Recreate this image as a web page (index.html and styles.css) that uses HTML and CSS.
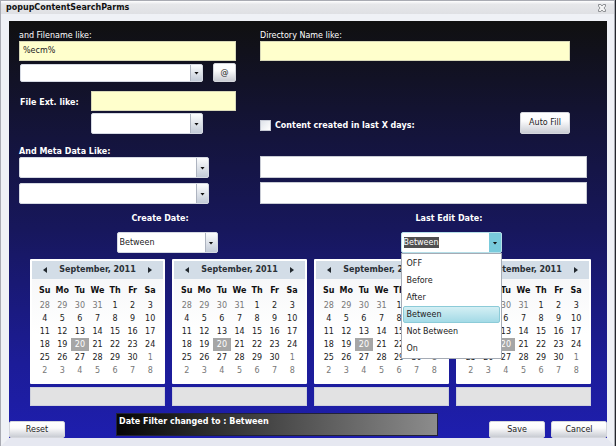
FILE: index.html
```html
<!DOCTYPE html>
<html lang="en">
<head>
<meta charset="utf-8">
<title>popupContentSearchParms</title>
<link rel="stylesheet" href="styles.css">
</head>
<body>
<div class="window">
  <header class="titlebar">
    <h1 class="title">popupContentSearchParms</h1>
    <button class="close" type="button" aria-label="Close">
      <svg viewBox="0 0 8 8" width="8" height="8"><path d="M.5.5h2.300L4 2 5.200.5h2.300v1.700L6 4l1.500 1.800v1.700H5.200L4 6 2.800 7.500H.5V5.800L2 4 .5 2.200z" fill="#f4f4f5" stroke="#85878a" stroke-width=".9"/></svg>
    </button>
  </header>

  <form class="panel">
    <div class="criteria">
      <div class="column">
        <label class="label" for="filename">and Filename like:</label>
        <input class="text yellow" id="filename" type="text" value="%ecm%">
        <div class="row preset">
          <span class="combo"><select aria-label="Filename preset"><option></option></select></span>
          <button class="button at" type="button">@</button>
        </div>
        <div class="extension">
          <label class="label strong" for="ext">File Ext. like:</label>
          <input class="text yellow" id="ext" type="text">
          <span class="combo ext-combo"><select aria-label="Extension preset"><option></option></select></span>
        </div>
      </div>
      <div class="column">
        <div class="directory">
          <label class="label" for="directory">Directory Name like:</label>
          <input class="text yellow" id="directory" type="text">
        </div>
        <div class="row recent">
          <label class="label strong check"><input type="checkbox">Content created in last X days:</label>
          <button class="button autofill" type="button">Auto Fill</button>
        </div>
      </div>
    </div>

    <div class="criteria meta">
      <div class="column meta-fields">
        <label class="label strong" for="meta1">And Meta Data Like:</label>
        <span class="combo tall"><select id="meta1"><option></option></select></span>
        <span class="combo tall"><select aria-label="Second meta data field"><option></option></select></span>
      </div>
      <div class="column meta-values">
        <input class="text" type="text" aria-label="First meta data value">
        <input class="text" type="text" aria-label="Second meta data value">
      </div>
    </div>

    <div class="dates">
      <div class="date-filter">
        <label class="label strong" for="created">Create Date:</label>
        <span class="combo tall"><select id="created"><option>Between</option></select></span>
      </div>
      <div class="date-filter">
        <span class="label strong" id="edited-label">Last Edit Date:</span>
        <span class="combo tall open">
          <button class="combo-value" type="button" role="combobox" aria-expanded="true" aria-controls="edited-list" aria-labelledby="edited-label"><span class="selected-text">Between</span></button>
          <ul class="menu" id="edited-list" role="listbox" aria-labelledby="edited-label">
            <li role="option">OFF</li>
            <li role="option">Before</li>
            <li role="option">After</li>
            <li class="active" role="option" aria-selected="true">Between</li>
            <li role="option">Not Between</li>
            <li role="option">On</li>
          </ul>
        </span>
      </div>
    </div>

    <div class="calendars" id="calendars"></div>

    <footer class="footer">
      <button class="button action" type="reset">Reset</button>
      <output class="status">Date Filter changed to : Between</output>
      <div class="row actions">
        <button class="button action" type="button">Save</button>
        <button class="button action" type="button">Cancel</button>
      </div>
    </footer>
  </form>
</div>
<script src="app.js"></script>
</body>
</html>
```
FILE: styles.css
```css
* { box-sizing: border-box; }

body {
  margin: 0;
  background: #24272d;
  color: #222;
  font: 8px/10px "DejaVu Sans", sans-serif;
}

button, input, select { font: inherit; color: inherit; margin: 0; }

.window {
  min-height: 100vh;
  margin-right: 1px;
  display: flex;
  flex-direction: column;
  border: solid #a9abb3;
  border-width: 1px 1px 0 1px;
  background: #e9ebf2;
}

.titlebar {
  display: flex;
  align-items: center;
  justify-content: space-between;
  height: 13px;
  padding: 0 8px 0 5px;
  background: linear-gradient(#fff, #e6e7ea 25%, #dfe0e4);
}

.title { margin: 0; font-size: 8px; line-height: 13px; color: #111; }

.close { display: flex; padding: 0; border: 0; background: none; }

.panel {
  flex: 1;
  display: flex;
  flex-direction: column;
  margin: 0;
  border: solid #eff1f6;
  border-width: 7px 7px 8px 8px;
  border-bottom-color: #e6e8f1;
  background: linear-gradient(#101010, #14143c 28%, #17175c 50%, #1c1c98 82%, #1e1eae) padding-box;
}

.criteria {
  display: grid;
  grid-template-columns: 217fr 327fr;
  column-gap: 24px;
  padding: 10px 20px 0 10px;
}

.column { display: flex; flex-direction: column; min-width: 0; }
.row { display: flex; align-items: center; justify-content: space-between; }

.label { color: #fff; line-height: 10px; }
.strong { font-weight: bold; }

.text {
  display: block;
  width: 100%;
  height: 20px;
  padding: 0 3px 2px;
  border: 1px solid #c8cbd4;
  background: #fff;
}
.yellow { background: #ffffcc; border-color: #d8d8b8; }

.combo { position: relative; display: block; height: 18px; }
.tall { height: 21px; }
.combo::after {
  content: "";
  position: absolute;
  right: 4px;
  top: calc(50% - 1px);
  width: 5px;
  height: 3px;
  background: #111;
  clip-path: polygon(0 0, 100% 0, 50% 100%);
  pointer-events: none;
}
.combo select, .combo-value {
  appearance: none;
  display: block;
  width: 100%;
  height: 100%;
  padding: 0 14px 0 2px;
  border: 1px solid #d5d9e2;
  border-radius: 2px;
  text-align: left;
  background:
    linear-gradient(#aeb4c0, #aeb4c0) right 11px top / 1px 100% no-repeat,
    linear-gradient(#fcfdfe, #c3cbd7) right / 11px 100% no-repeat,
    #fff;
}

.preset { height: 23px; }
.preset .combo { flex: 1; margin: 0 10px 0 1px; }

.button {
  padding: 0;
  border: 1px solid #d4d6dc;
  border-radius: 2px;
  color: #222;
  text-align: center;
  background: linear-gradient(#fff, #fbfbfc 40%, #c9ccd3);
}
.at { width: 23px; height: 19px; }

.extension {
  display: grid;
  grid-template-columns: 71px 1fr;
  align-items: center;
  row-gap: 2px;
  margin-top: 7px;
  padding-left: 1px;
}
.extension .label { padding-top: 3px; }
.ext-combo { grid-column: 2; height: 21px; margin-right: 33px; }

.directory, .recent { margin-right: 17px; }
.directory .label { display: block; }
.recent { margin-top: 51px; }
.check { display: flex; align-items: center; gap: 4px; padding-top: 5px; }
.check input {
  appearance: none;
  width: 11px;
  height: 11px;
  border: 1px solid #c5c9d4;
  background: linear-gradient(135deg, #dfe3ea, #fff);
}
.autofill { width: 50px; height: 22px; }

.meta { padding-top: 13px; }
.meta-fields { padding-right: 27px; gap: 5px; }
.meta-fields .label { margin-bottom: -5px; }
.meta-values { justify-content: flex-end; gap: 4px; }
.meta-values .text { height: 22px; }

.dates {
  display: grid;
  grid-template-columns: 1fr 1fr;
  justify-items: center;
  padding: 10px 14px 0 16px;
}
.date-filter { width: 101px; }
.date-filter .label { display: block; margin-bottom: 8px; padding-left: 15px; white-space: nowrap; }

.open .combo-value {
  border-color: #b5dfe8;
  background: linear-gradient(#79cbdc, #79cbdc) right / 12px 100% no-repeat, #fff;
}
.selected-text { padding: 1px 0; background: #505050; color: #fff; }

.menu {
  position: absolute;
  z-index: 1;
  top: 100%;
  left: 0;
  right: 0;
  margin: 0;
  padding: 1px;
  list-style: none;
  border: 1px solid #a5abb5;
  background: #fff;
}
.menu li { height: 17px; padding: 0 3px; border: 1px solid transparent; border-radius: 2px; line-height: 15px; white-space: nowrap; }
.menu .active { border-color: #8ccbd8; background: linear-gradient(#d4eff4, #a3dae6); }

.calendars {
  display: grid;
  grid-template-columns: repeat(4, 1fr);
  gap: 7px;
  padding: 6px 16px 0 21px;
}
.calendar-face {
  height: 125px;
  border: 2px solid #fff;
  border-radius: 1px;
  background: linear-gradient(#f4f5f7, #fff 60%);
}
.calendar-head {
  display: flex;
  align-items: center;
  justify-content: space-between;
  height: 18px;
  padding: 0 10px;
  background: #d3dde7;
  color: #2a3036;
  font-weight: bold;
  white-space: nowrap;
}
.arrow { display: flex; padding: 0; border: 0; background: none; }
.days { width: 100%; padding: 2px 4px 0; border-spacing: 0; table-layout: fixed; text-align: center; }
.days th, .days td { height: 13px; padding: 0; line-height: 13px; }
.days th { height: 18px; color: #111; }
.days .other { color: #777; }
.days .today { background: #a6a6a6; color: #fff; }
.range {
  width: 100%;
  height: 19px;
  display: block;
  margin-top: 3px;
  border: 1px solid #cfd1dc;
  background: #e2e2e3;
}

.footer {
  display: flex;
  align-items: flex-end;
  gap: 51px;
  margin-top: auto;
}
.action { width: 56px; height: 17px; }
.actions { gap: 6px; }
.status {
  flex: 1;
  height: 23px;
  margin-bottom: 2px;
  padding: 3px 2px;
  border: 1px solid #222238;
  background: linear-gradient(90deg, #060606, #8c8c8c);
  color: #fff;
  font-weight: bold;
}
```
FILE: app.js
```js
const weekdays = ["Su", "Mo", "Tu", "We", "Th", "Fr", "Sa"];
const leading = 4;
const monthLength = 30;
const previousLength = 31;
const today = 20;

function dayCell(index) {
  const day = index - leading + 1;
  if (day < 1) return `<td class="other">${previousLength + day}</td>`;
  if (day > monthLength) return `<td class="other">${day - monthLength}</td>`;
  return `<td${day === today ? ' class="today"' : ""}>${day}</td>`;
}

function calendar(name) {
  let rows = "";
  for (let week = 0; week < 6; week++) {
    rows += "<tr>" + weekdays.map((_, i) => dayCell(week * 7 + i)).join("") + "</tr>";
  }
  return `<div class="calendar">
    <div class="calendar-face">
      <div class="calendar-head">
        <button class="arrow" type="button" aria-label="Previous month"><svg width="6" height="8" viewBox="0 0 6 8"><path d="M5 1v6L1 4z" fill="#22282e"/></svg></button>
        <span>September, 2011</span>
        <button class="arrow" type="button" aria-label="Next month"><svg width="6" height="8" viewBox="0 0 6 8"><path d="M1 1v6l4-3z" fill="#22282e"/></svg></button>
      </div>
      <table class="days">
        <thead><tr>${weekdays.map(d => `<th>${d}</th>`).join("")}</tr></thead>
        <tbody>${rows}</tbody>
      </table>
    </div>
    <input class="range" type="text" readonly aria-label="${name}">
  </div>`;
}

document.getElementById("calendars").innerHTML =
  ["Created from", "Created to", "Edited from", "Edited to"].map(calendar).join("");
```
